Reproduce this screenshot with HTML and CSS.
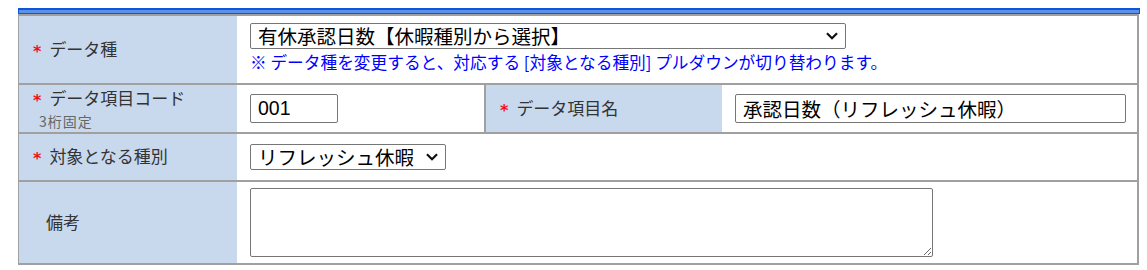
FILE: index.html
```html
<!DOCTYPE html>
<html lang="ja">
<head>
  <meta charset="UTF-8">
  <title>データ項目設定</title>
  <link rel="stylesheet" href="styles.css">
</head>
<body>

  <div class="wrap">
    <div class="topbar"></div>

    <div class="form">
      <div class="row row-type">
        <div class="label"><div><span class="req">*</span>データ種</div></div>
        <div class="value wide">
          <select class="sel-type">
            <option selected>有休承認日数【休暇種別から選択】</option>
            <option>有休取得日数</option>
          </select>
          <div class="note">※ データ種を変更すると、対応する [対象となる種別] プルダウンが切り替わります。</div>
        </div>
      </div>

      <div class="row row-code">
        <div class="label">
          <div><span class="req">*</span>データ項目コード</div>
          <div class="sub">3桁固定</div>
        </div>
        <div class="value">
          <input type="text" class="in-code" value="001">
        </div>
        <div class="label label-mid"><div><span class="req">*</span>データ項目名</div></div>
        <div class="value">
          <input type="text" class="in-name" value="承認日数（リフレッシュ休暇）">
        </div>
      </div>

      <div class="row row-kind">
        <div class="label"><div><span class="req">*</span>対象となる種別</div></div>
        <div class="value wide">
          <select class="sel-kind">
            <option selected>リフレッシュ休暇</option>
            <option>夏季休暇</option>
          </select>
        </div>
      </div>

      <div class="row row-memo">
        <div class="label label-plain"><div>備考</div></div>
        <div class="value wide">
          <textarea class="memo"></textarea>
        </div>
      </div>
    </div>
  </div>

</body>
</html>
```

FILE: styles.css
```css
* {
  box-sizing: border-box;
}

body {
  margin: 0;
  background-color: #fff;
  font-family: "Noto Sans CJK JP", "Liberation Sans", sans-serif;
  color: #333;
}

.wrap {
  padding-top: 8px;
  margin-left: 18px;
  width: 1122px;
}

.topbar {
  height: 6px;
  background-color: #5b92e8;
  border: 1px solid #0a56df;
  border-top-width: 2px;
}

.form {
  width: 1121px;
  border-left: 1px solid #a0a0a0;
  border-right: 2px solid #a0a0a0;
  border-top: 2px solid #a0a0a0;
}

.row {
  display: grid;
  grid-template-columns: 218px 247px 238px 1fr;
  border-bottom: 2px solid #a0a0a0;
}

.row-type { height: 69px; }
.row-code { height: 49px; }
.row-kind { height: 48px; }
.row-memo { height: 83px; }

.label {
  background-color: #c8d9ee;
  padding-left: 14px;
  font-size: 17px;
  display: flex;
  flex-direction: column;
  justify-content: center;
  line-height: 1.3;
}

.label-mid {
  border-left: 2px solid #a0a0a0;
}

.label-plain {
  padding-left: 27px;
}

.req {
  color: #f0101a;
  font-weight: bold;
  font-family: "DejaVu Sans", sans-serif;
  font-size: 16px;
  margin-right: 8px;
  position: relative;
  top: 1px;
}

.sub {
  font-size: 14px;
  color: #666;
  padding-left: 6px;
  letter-spacing: 1px;
  margin-top: 1px;
}

.value {
  padding-left: 13px;
  display: flex;
  flex-direction: column;
  justify-content: center;
  align-items: flex-start;
}

.wide {
  grid-column: span 3;
}

.row-type .value {
  justify-content: flex-start;
  padding-top: 7px;
}

select,
input,
textarea {
  font-family: "Noto Sans CJK JP", "Liberation Sans", sans-serif;
  font-size: 19.5px;
  color: #000;
  border: 1px solid #767676;
  border-radius: 2px;
  background-color: #fff;
  margin: 0;
}

select {
  appearance: none;
  -webkit-appearance: none;
  height: 26px;
  padding: 0 26px 0 7px;
  line-height: 24px;
  background-image: url("data:image/svg+xml,%3Csvg xmlns='http://www.w3.org/2000/svg' width='12' height='8' viewBox='0 0 12 8'%3E%3Cpath d='M1 1.2 6 6.2 11 1.2' fill='none' stroke='%23111' stroke-width='2.2'/%3E%3C/svg%3E");
  background-repeat: no-repeat;
  background-size: 12px 8px;
  background-position: right 7px center;
}

.sel-type { width: 596px; }
.sel-kind { width: 196px; }

input {
  height: 29px;
  padding: 0 7px;
  font-family: "Liberation Sans", "Noto Sans CJK JP", sans-serif;
}

.in-code { width: 88px; }
.in-name { width: 391px; }

.note {
  color: #0000ff;
  font-size: 16.7px;
  line-height: 20px;
  margin-top: 3px;
}

.memo {
  width: 683px;
  height: 69px;
  resize: both;
}
```
